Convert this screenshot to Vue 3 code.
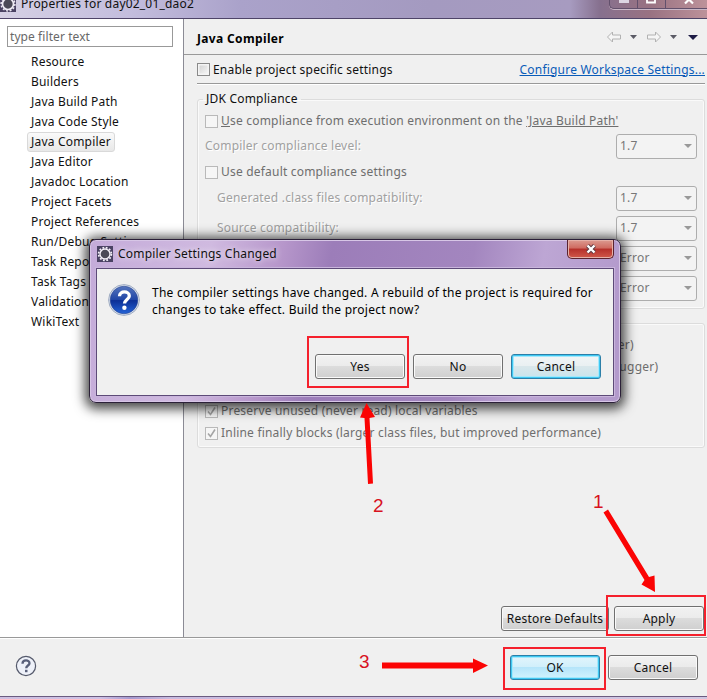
<script setup>
const pages = [
  'Resource', 'Builders', 'Java Build Path', 'Java Code Style', 'Java Compiler',
  'Java Editor', 'Javadoc Location', 'Project Facets', 'Project References',
  'Run/Debug Settings', 'Task Repository', 'Task Tags', 'Validation', 'WikiText',
]
const levels = [
  { label: 'Generated .class files compatibility:', value: '1.7' },
  { label: 'Source compatibility:', value: '1.7' },
  { label: "Disallow identifiers called 'assert':", value: 'Error' },
  { label: "Disallow identifiers called 'enum':", value: 'Error' },
]
const classFile = [
  { text: 'Add variable attributes to generated class files (used by the debugger)', cls: 'c1' },
  { text: 'Add line number attributes to generated class files (used by the debugger)', cls: 'c2' },
  { text: 'Add source file name to generated class file (used by the debugger)', cls: 'c3' },
  { text: 'Preserve unused (never read) local variables', cls: 'c4' },
  { text: 'Inline finally blocks (larger class files, but improved performance)', cls: 'c5' },
]
</script>

<template>
  <div class="window">
    <header class="titlebar">
      <svg class="gear" width="16" height="16" viewBox="0 0 16 16">
        <rect width="16" height="16" fill="#4a4263" />
        <circle cx="8" cy="8" r="5.5" fill="#4b4957" stroke="#eeeaf4" stroke-width="1.7" />
        <circle cx="8" cy="8" r="6.9" fill="none" stroke="#eeeaf4" stroke-width="1.5" stroke-dasharray="1.9 1.7" />
      </svg>
      <span class="title">Properties for day02_01_dao2</span>
      <div class="winbtns">
        <i><svg width="28" height="8"><rect x="9" y="0" width="10" height="3" fill="#ddd5e2" /></svg></i>
        <i><svg width="28" height="8"><path d="M9 0V2.500H17V0" fill="none" stroke="#fff" stroke-width="1.800" /></svg></i>
        <i class="wide"><svg width="46" height="8"><path d="M19 3.500L23 -.5L27 3.500" fill="none" stroke="#fff" stroke-width="2.200" /></svg></i>
      </div>
    </header>

    <main class="body">
      <aside class="side">
        <div class="filter">type filter text</div>
        <ul class="tree">
          <li v-for="p in pages" :key="p"><span :class="{ sel: p === 'Java Compiler' }">{{ p }}</span></li>
        </ul>
      </aside>

      <section class="page">
        <div class="head">
          <h1>Java Compiler</h1>
          <svg class="nav" width="96" height="16" viewBox="0 0 96 16">
            <path d="M1.500 8L6.500 3V6H14.500V10H6.500V13Z" fill="#f5f5f5" stroke="#b2b2b2" />
            <path d="M24 6H31L27.500 10Z" fill="#5b5b66" />
            <path d="M54.500 8L49.500 3V6H41.500V10H49.500V13Z" fill="#f5f5f5" stroke="#b2b2b2" />
            <path d="M64 6H71L67.500 10Z" fill="#5b5b66" />
            <path d="M82 6H92L87 11Z" fill="#1d1b45" />
          </svg>
        </div>
        <div class="enable">
          <i class="cb on"></i><span class="enable-text">Enable project specific settings</span>
          <a class="conf">Configure Workspace Settings...</a>
        </div>
        <div class="rule"></div>

        <fieldset class="group jdk">
          <legend>JDK Compliance</legend>
          <div class="row r1"><i class="cb"></i><span class="gray use"><u>U</u>se compliance from execution environment on the <u>'Java Build Path'</u></span></div>
          <div class="row r2"><span class="off">Compiler compliance level:</span><div class="combo">1.7<b></b></div></div>
          <div class="row r3"><i class="cb"></i><span class="gray def">Use default compliance settings</span></div>
          <div v-for="l in levels" :key="l.label" class="row lv">
            <span class="off">{{ l.label }}</span><div class="combo">{{ l.value }}<b></b></div>
          </div>
        </fieldset>

        <fieldset class="group cls">
          <legend>Classfile Generation</legend>
          <div v-for="c in classFile" :key="c.text" class="row cf">
            <i class="cb"><svg width="11" height="11" viewBox="0 0 11 11"><path d="M2 5.500L4.500 8.500L9 1.500" fill="none" stroke="#a5a5a5" stroke-width="1.600" /></svg></i>
            <span class="gray" :class="c.cls">{{ c.text }}</span>
          </div>
        </fieldset>

        <div class="page-actions">
          <button class="btn restore">Restore Defaults</button>
          <button class="btn">Apply</button>
        </div>
      </section>
    </main>

    <footer class="foot">
      <svg class="help" width="22" height="22" viewBox="0 0 22 22">
        <circle cx="11" cy="11" r="9.600" fill="#eef1f9" stroke="#555a6c" stroke-width="1.200" />
        <path d="M7.500 8.700C7.500 4.300 14.500 4.500 14.500 8.200C14.500 10.600 11.200 10.400 11.200 13.300" fill="none" stroke="#59607a" stroke-width="2.300" />
        <rect x="10" y="14.800" width="2.500" height="2.400" fill="#59607a" />
      </svg>
      <button class="btn hot">OK</button>
      <button class="btn">Cancel</button>
    </footer>
    <div class="bottom-edge"></div>

    <div class="dialog">
      <div class="dlg-title">
        <svg class="gear" width="16" height="16" viewBox="0 0 16 16">
          <rect width="16" height="16" fill="#4a4263" />
          <circle cx="8" cy="8" r="5" fill="#4b4957" stroke="#f4f0f8" stroke-width="1.400" />
          <circle cx="8" cy="8" r="6.400" fill="none" stroke="#f4f0f8" stroke-width="1.700" stroke-dasharray="1.800 1.550" />
        </svg>
        <span>Compiler Settings Changed</span>
        <div class="close">
          <svg width="14" height="12" viewBox="0 0 14 12">
            <path d="M3.500 2.500L10.500 9.500M10.500 2.500L3.500 9.500" stroke="#5c3a42" stroke-width="4.200" />
            <path d="M3.500 2.500L10.500 9.500M10.500 2.500L3.500 9.500" stroke="#fff" stroke-width="2.400" />
          </svg>
        </div>
      </div>
      <div class="dlg-client">
        <div class="msg">
          <svg width="32" height="32" viewBox="0 0 32 32">
            <defs>
              <linearGradient id="ball" x1="0" y1="0" x2="0" y2="1">
                <stop offset="0" stop-color="#5474bd" /><stop offset=".5" stop-color="#1f45a6" /><stop offset=".52" stop-color="#0c2f96" /><stop offset="1" stop-color="#2463d6" />
              </linearGradient>
            </defs>
            <circle cx="16" cy="16" r="15.400" fill="#dfe5ef" stroke="#8b9bb5" stroke-width=".8" />
            <circle cx="16" cy="16" r="13.800" fill="url(#ball)" stroke="#274390" stroke-width=".6" />
            <path d="M11.500 12.300C11.500 6.300 21.300 6.800 21.300 11.900C21.300 15.300 16.500 15.600 16.500 19.600" fill="none" stroke="#fff" stroke-width="3.300" />
            <circle cx="16.400" cy="23.700" r="2.200" fill="#fff" />
          </svg>
          <p><span class="m1">The compiler settings have changed. A rebuild of the project is required for</span><br><span class="m2">changes to take effect. Build the project now?</span></p>
        </div>
        <div class="dlg-actions">
          <button class="btn">Yes</button>
          <button class="btn">No</button>
          <button class="btn hot pale">Cancel</button>
        </div>
      </div>
    </div>

    <svg class="marks" width="707" height="699" viewBox="0 0 707 699">
      <g fill="none" stroke="#f5202c" stroke-width="2">
        <rect x="308" y="337" width="100" height="50" />
        <rect x="607" y="596" width="98" height="39" />
        <rect x="504" y="648" width="101" height="41" />
      </g>
      <g fill="#fb0404">
        <path d="M366.500 403L360 417.500L364.500 418L368 484L373 483.500L369.500 418L375 417Z" />
        <path d="M603.500 512.500L608 509.500L649 577L654.500 575.500L655 592L641.500 584.500L644.500 580Z" />
        <path d="M382 662.500H473V658.500L488 665.500L473 673V668.500H382Z" />
      </g>
      <g class="nums">
        <text x="593" y="508">1</text>
        <text x="373" y="512">2</text>
        <text x="359" y="668">3</text>
      </g>
    </svg>
  </div>
</template>

<style>
body { margin: 0; overflow: hidden; }
</style>

<style scoped>
* { box-sizing: border-box; }
.window {
  position: relative; display: flex; flex-direction: column; width: 707px; height: 699px; overflow: hidden;
  background: #f0f0f0; color: #111; font: 12px/20px "Noto Sans", "Open Sans", sans-serif; letter-spacing: .2px; white-space: nowrap;
}
.titlebar {
  position: relative; display: flex; align-items: flex-start; height: 19px; overflow: hidden; border-bottom: 1px solid #4e4468;
  background: linear-gradient(90deg, #d5d0e4 0, #c3bddd 130px, #aaa2ca 240px, #a49ac0 430px, #a79bc0 570px, #86708e 600px, #997282 650px, #bd929a 707px);
}
.titlebar .gear { margin-top: -4px; flex: none; }
.title { margin: -6px 0 0 5px; }
.winbtns { display: flex; height: 9px; margin-left: auto; border: 1px solid #62506c; border-top: 0; border-right: 0; border-radius: 0 0 0 5px; box-shadow: 0 1px #c9b6c5; }
.winbtns i { width: 28px; height: 8px; border-right: 1px solid #62506c; line-height: 0; overflow: hidden; }
.winbtns .wide { width: 41px; border: 0; }
.body { display: flex; height: 618px; }
.side { width: 184px; padding: 7px; background: #fff; border-right: 1px solid #8b8b95; }
.filter { width: 166px; height: 21px; padding-left: 2px; border: 1px solid #999; color: #686868; line-height: 20px; letter-spacing: .08px; }
.tree { margin: 5px 0 0; padding: 0 0 0 20px; list-style: none; }
.tree li { height: 20px; }
.tree span { display: inline-block; height: 20px; padding: 0 3px; border: 1px solid transparent; line-height: 18px; }
.tree .sel { border-color: #d9d9d9; border-radius: 3px; background: linear-gradient(#fafafa, #e8e8e8); }
.page { display: flex; flex-direction: column; width: 523px; }
.head { display: flex; justify-content: space-between; height: 36px; padding: 0 5px 0 13px; border-bottom: 1px solid #999; }
h1 { margin: 10px 0 0; font-size: 12px; line-height: 20px; letter-spacing: .35px; color: #000; }
.nav { margin-top: 10px; }
.enable { display: flex; align-items: center; height: 28px; padding: 1px 0 0 13px; }
.cb { display: block; flex: none; width: 13px; height: 13px; margin-right: 3px; border: 1px solid #b9b9b9; background: #f6f6f6; line-height: 0; }
.cb.on { border-color: #8a8a8a; background: linear-gradient(135deg, #cfcfcf, #fafafa); box-shadow: inset 0 0 0 1.500px #f4f4f4; }
.conf { margin: 0 2px 0 auto; color: #0a5cb8; text-decoration: underline; }
.rule { height: 2px; margin: 0 2px 0 13px; border-top: 1px solid #999; background: #fff; }
.group { position: relative; min-width: 0; margin: 0 2px 0 13px; padding: 0; border: 1px solid #dcdcdc; border-radius: 3px; box-shadow: inset 0 0 0 1px #fafafa; }
legend { height: 20px; margin-left: 5px; padding: 0 3px; line-height: 20px; }
.jdk { height: 220px; margin-top: 4px; }
.cls { height: 135px; margin-top: 4px; }
.row { display: flex; align-items: center; padding: 0 7px; }
.gray { color: #6e6e6e; }
.off { color: #a0a0a0; text-shadow: 1px 1px #fff; }
.r1 { height: 24px; }
.r2, .r3 { height: 26px; }
.lv { height: 30px; padding-left: 19px; }
.lv:nth-of-type(4) { height: 26px; margin-bottom: 2px; }
.combo { display: flex; align-items: center; justify-content: space-between; width: 81px; height: 25px; margin-left: auto; padding: 0 4px 0 3px; border: 1px solid #adadad; border-radius: 3px; background: #f3f3f3; color: #777; }
.combo b { width: 0; height: 0; border: 4px solid transparent; border-top: 4px solid #999; border-bottom: 0; }
.cf { height: 22px; }
legend + .cf { margin-top: 1px; }
.c1, .c2, .c3 { letter-spacing: .25px; }
.page-actions { display: flex; justify-content: flex-end; gap: 5px; margin-top: auto; padding: 0 3px 6px 0; }
.btn {
  width: 90px; height: 25px; padding: 0; border: 1px solid #707070; border-radius: 3px; box-shadow: inset 0 0 0 1px #fafafa;
  background: linear-gradient(#f2f2f2 0, #ebebeb 49%, #dcdcdc 50%, #cfcfcf 100%); color: #111; font: inherit; letter-spacing: inherit; line-height: 22px;
}
.restore { width: 108px; }
.hot { border: 1px solid #2c7fa8; background: linear-gradient(#e3f5fc 0, #d0effb 49%, #b5e5fa 50%, #d2f3fd 100%); box-shadow: inset 0 0 0 1px #3fc8f2, inset 0 0 0 2px #a5e8fb; }
.pale { background: linear-gradient(#f2f5f6 0, #e9f0f2 49%, #d9e7eb 50%, #c9e4ec 100%); }
.foot { display: flex; gap: 8px; align-items: flex-start; height: 59px; padding: 17px 9px 0 15px; border-top: 1px solid #999; box-shadow: inset 0 1px #fff; }
.help { margin-right: auto; }
.bottom-edge { height: 3px; border-top: 1px solid #6b5b80; background: linear-gradient(90deg, #cdbfe0, #cfc2e6 100px, #a69ad0 130px, #c8bbe0 170px, #d0c7e2); }

.dialog {
  position: absolute; left: 89px; top: 239px; width: 532px; height: 164px; padding: 0 6px 6px; border: 1px solid #2b2038; border-radius: 7px;
  background: linear-gradient(100deg, #c4abd9 0, #d0bae0 120px, #b797cb 190px, #9c7db9 240px, #a386bf 380px, #bda6d4 450px, #b39acc 532px);
  box-shadow: inset 0 0 0 1px #d7c6e6, 0 2px 12px 4px rgba(0, 0, 0, .72);
}
.dlg-title { display: flex; align-items: center; height: 28px; padding-left: 1px; }
.dlg-title span { margin-left: 5px; text-shadow: 0 0 6px #fff; }
.close { display: flex; align-items: center; justify-content: center; align-self: flex-start; width: 47px; height: 19px; margin-left: auto; border: 1px solid #5a2330; border-top: 0; border-radius: 0 0 5px 5px; background: linear-gradient(#dc9b91 0, #cf6a60 45%, #b5302a 50%, #d0584a 100%); box-shadow: inset 0 0 0 1px #e6b1a8; }
.dlg-client { display: flex; flex-direction: column; height: 128px; border: 1px solid #5d4a78; background: #f0f0f0; box-shadow: 0 0 0 1px #c9b5dc; }
.msg { display: flex; gap: 12px; padding: 15px 0 0 11px; }
p { margin: 0; line-height: 17px; color: #000; }
.m1, .m2 { letter-spacing: .25px; }
.dlg-actions { display: flex; justify-content: flex-end; gap: 8px; margin-top: auto; padding: 0 12px 16px 0; }
.marks { position: absolute; left: 0; top: 0; }
.nums { fill: #d8121e; font: 19px "Liberation Sans", sans-serif; letter-spacing: 0; }
</style>
